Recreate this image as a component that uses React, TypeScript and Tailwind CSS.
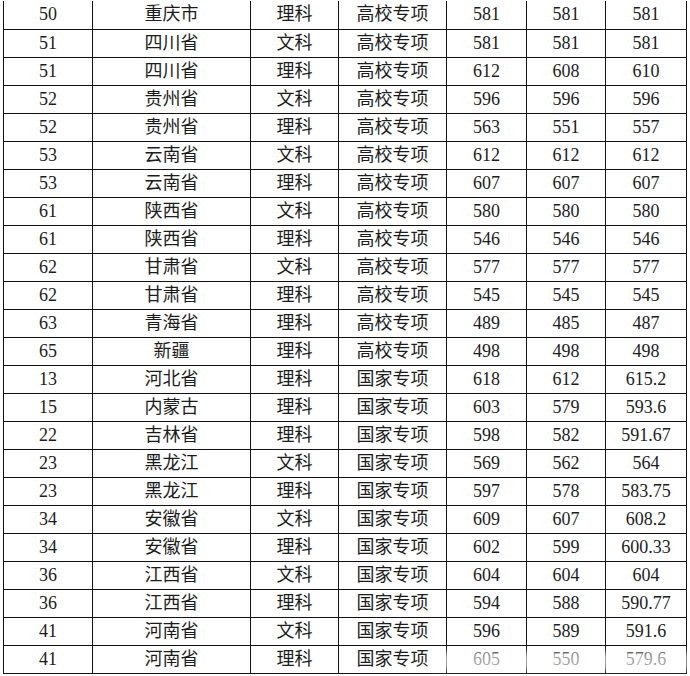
const rows: string[][] = [
  ["50", "重庆市", "理科", "高校专项", "581", "581", "581"],
  ["51", "四川省", "文科", "高校专项", "581", "581", "581"],
  ["51", "四川省", "理科", "高校专项", "612", "608", "610"],
  ["52", "贵州省", "文科", "高校专项", "596", "596", "596"],
  ["52", "贵州省", "理科", "高校专项", "563", "551", "557"],
  ["53", "云南省", "文科", "高校专项", "612", "612", "612"],
  ["53", "云南省", "理科", "高校专项", "607", "607", "607"],
  ["61", "陕西省", "文科", "高校专项", "580", "580", "580"],
  ["61", "陕西省", "理科", "高校专项", "546", "546", "546"],
  ["62", "甘肃省", "文科", "高校专项", "577", "577", "577"],
  ["62", "甘肃省", "理科", "高校专项", "545", "545", "545"],
  ["63", "青海省", "理科", "高校专项", "489", "485", "487"],
  ["65", "新疆", "理科", "高校专项", "498", "498", "498"],
  ["13", "河北省", "理科", "国家专项", "618", "612", "615.2"],
  ["15", "内蒙古", "理科", "国家专项", "603", "579", "593.6"],
  ["22", "吉林省", "理科", "国家专项", "598", "582", "591.67"],
  ["23", "黑龙江", "文科", "国家专项", "569", "562", "564"],
  ["23", "黑龙江", "理科", "国家专项", "597", "578", "583.75"],
  ["34", "安徽省", "文科", "国家专项", "609", "607", "608.2"],
  ["34", "安徽省", "理科", "国家专项", "602", "599", "600.33"],
  ["36", "江西省", "文科", "国家专项", "604", "604", "604"],
  ["36", "江西省", "理科", "国家专项", "594", "588", "590.77"],
  ["41", "河南省", "文科", "国家专项", "596", "589", "591.6"],
  ["41", "河南省", "理科", "国家专项", "605", "550", "579.6"],
];

const widths = ["w-[89px]", "w-[158px]", "w-[88px]", "w-[108px]", "w-[80px]", "w-[79px]", "w-[81px]"];

export default function App() {
  return (
    <div className="relative w-[690px] h-[676px] overflow-hidden bg-white">
      <div className="pl-[3px] mt-[1px]">
        <table
          className="table-fixed border-collapse w-[684px] text-[18px] text-[#1c1c1c]"
          style={{ fontFamily: '"Liberation Serif", "Noto Sans CJK SC", serif' }}
        >
          <colgroup>
            {widths.map((w, i) => (
              <col key={i} className={w} />
            ))}
          </colgroup>
          <tbody>
            {rows.map((r, i) => (
              <tr key={i} className="h-[28px]">
                {r.map((c, j) => (
                  <td
                    key={j}
                    className={
                      i === 0
                        ? "border border-t-0 border-[#111] p-0 text-center leading-[27px]"
                        : "border border-[#111] p-0 text-center leading-[27px]"
                    }
                  >
                    {c}
                  </td>
                ))}
              </tr>
            ))}
          </tbody>
        </table>
      </div>
      {/* watermark smear over the last row */}
      <div className="absolute left-[430px] top-[652px] w-[260px] h-[18px] bg-white/60 blur-[3px]" />
    </div>
  );
}
